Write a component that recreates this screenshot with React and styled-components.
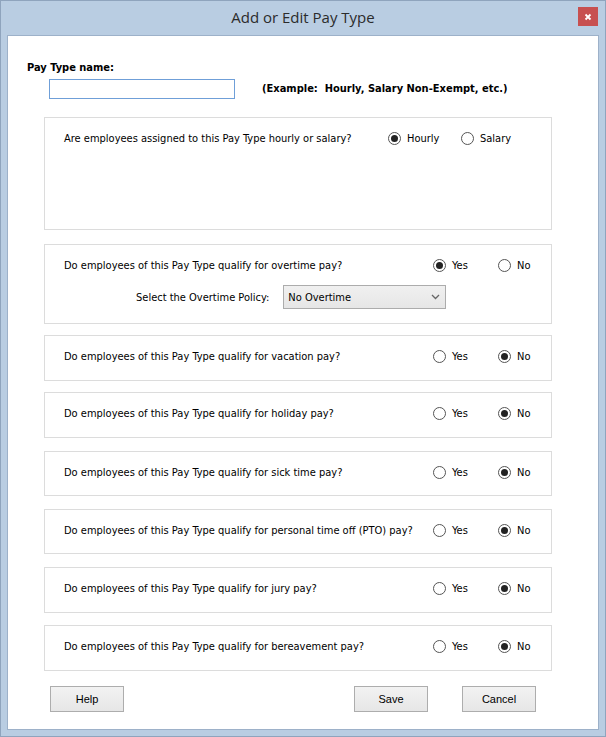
import styled, { createGlobalStyle } from "styled-components";

const GlobalStyle = createGlobalStyle`
  html, body {
    margin: 0;
    padding: 0;
    background: #ffffff;
  }
  * {
    box-sizing: border-box;
  }
`;

const benefits = [
  { label: "vacation", top: 11, height: 46 },
  { label: "holiday", top: 11, height: 46 },
  { label: "sick time", top: 13, height: 45 },
  { label: "personal time off (PTO)", top: 13, height: 45 },
  { label: "jury", top: 13, height: 46 },
  { label: "bereavement", top: 12, height: 46 },
];

function Radio({ checked, label, width }) {
  return (
    <Option $width={width}>
      <Circle $checked={checked} />
      <OptionLabel>{label}</OptionLabel>
    </Option>
  );
}

function YesNo({ yes }) {
  return (
    <>
      <Radio checked={yes} label="Yes" width={65} />
      <Radio checked={!yes} label="No" />
    </>
  );
}

export default function App() {
  return (
    <>
      <GlobalStyle />
      <Window>
        <TitleBar>
          <Title>Add or Edit Pay Type</Title>
          <CloseButton>
            <svg width="8" height="8" viewBox="0 0 8 8">
              <path d="M1.5 1.5 L6.5 6.5 M6.5 1.5 L1.5 6.5" stroke="#fff" strokeWidth="1.8" />
            </svg>
          </CloseButton>
        </TitleBar>
        <Client>
          <NameLabel>Pay Type name:</NameLabel>
          <NameRow>
            <NameInput type="text" />
            <Example>(Example:&nbsp; Hourly, Salary Non-Exempt, etc.)</Example>
          </NameRow>

          <Section $height={113} $top={18}>
            <Row>
              <Question $width={324}>
                Are employees assigned to this Pay Type hourly or salary?
              </Question>
              <Radio checked label="Hourly" width={73} />
              <Radio label="Salary" />
            </Row>
          </Section>

          <Section $height={80} $top={14}>
            <Row>
              <Question $width={369}>
                Do employees of this Pay Type qualify for overtime pay?
              </Question>
              <YesNo yes />
            </Row>
            <PolicyRow>
              <PolicyLabel>Select the Overtime Policy:</PolicyLabel>
              <Select>
                <span>No Overtime</span>
                <svg width="9" height="6" viewBox="0 0 9 6">
                  <path d="M1 1 L4.5 4.5 L8 1" stroke="#666" strokeWidth="1.3" fill="none" />
                </svg>
              </Select>
            </PolicyRow>
          </Section>

          {benefits.map((b) => (
            <Section key={b.label} $height={b.height} $top={b.top}>
              <Row>
                <Question $width={369}>
                  Do employees of this Pay Type qualify for {b.label} pay?
                </Question>
                <YesNo />
              </Row>
            </Section>
          ))}

          <ButtonRow>
            <Button>Help</Button>
            <Spacer />
            <Button>Save</Button>
            <Button>Cancel</Button>
          </ButtonRow>
        </Client>
      </Window>
    </>
  );
}

const Window = styled.div`
  width: 606px;
  height: 737px;
  background: #b9cde2;
  border: 1px solid #8fa4bd;
  display: flex;
  flex-direction: column;
  font-family: "DejaVu Sans Condensed", "Liberation Sans", sans-serif;
  font-size: 11px;
  color: #000;
`;

const TitleBar = styled.div`
  height: 34px;
  display: flex;
  align-items: center;
  justify-content: center;
  position: relative;
`;

const Title = styled.div`
  font-family: "Open Sans", "Noto Sans", sans-serif;
  font-size: 15px;
  color: #2b2b2b;
  margin-top: -2px;
`;

const CloseButton = styled.div`
  position: absolute;
  right: 7px;
  top: 6px;
  width: 20px;
  height: 19px;
  background: #c75050;
  display: flex;
  align-items: center;
  justify-content: center;
`;

const Client = styled.div`
  flex: 1;
  margin: 0 6px 6px;
  background: #fff;
  border: 1px solid #9db1c9;
  padding: 25px 0 0 19px;
  display: flex;
  flex-direction: column;
`;

const NameLabel = styled.div`
  font-weight: bold;
  line-height: 13px;
`;

const NameRow = styled.div`
  display: flex;
  align-items: center;
  margin-top: 5px;
  padding-left: 22px;
`;

const NameInput = styled.input`
  width: 186px;
  height: 20px;
  border: 1px solid #6f9fd8;
  margin: 0;
  padding: 0 3px;
  outline: none;
`;

const Example = styled.div`
  font-weight: bold;
  margin-left: 27px;
  margin-top: -2px;
`;

const Section = styled.div`
  width: 508px;
  height: ${(p) => p.$height}px;
  margin-top: ${(p) => p.$top}px;
  margin-left: 17px;
  border: 1px solid #dcdcdc;
  padding: 13px 0 0 19px;
`;

const Row = styled.div`
  display: flex;
  align-items: center;
  line-height: 13px;
`;

const Question = styled.div`
  width: ${(p) => p.$width}px;
  flex-shrink: 0;
`;

const Option = styled.div`
  display: flex;
  align-items: center;
  width: ${(p) => (p.$width ? `${p.$width}px` : "auto")};
  margin-top: 1px;
`;

const Circle = styled.span`
  width: 13px;
  height: 13px;
  border-radius: 50%;
  border: 1px solid #555;
  background: #fff;
  display: flex;
  align-items: center;
  justify-content: center;
  flex-shrink: 0;

  &::after {
    content: "";
    width: 7px;
    height: 7px;
    border-radius: 50%;
    background: #222;
    display: ${(p) => (p.$checked ? "block" : "none")};
  }
`;

const OptionLabel = styled.span`
  margin-left: 6px;
`;

const PolicyRow = styled.div`
  display: flex;
  align-items: center;
  margin-top: 13px;
  padding-left: 72px;
`;

const PolicyLabel = styled.div`
  margin-right: 14px;
`;

const Select = styled.div`
  width: 163px;
  height: 24px;
  border: 1px solid #acacac;
  background: linear-gradient(#f0f0f0, #e6e6e6);
  display: flex;
  align-items: center;
  justify-content: space-between;
  padding: 0 5px 0 4px;
`;

const ButtonRow = styled.div`
  display: flex;
  gap: 34px;
  margin-top: 15px;
  margin-left: 23px;
  width: 486px;
`;

const Spacer = styled.div`
  flex: 1;
`;

const Button = styled.div`
  width: 74px;
  height: 26px;
  border: 1px solid #adadad;
  background: linear-gradient(#f2f2f2, #e6e6e6);
  display: flex;
  align-items: center;
  justify-content: center;
  font-family: "Liberation Sans", sans-serif;
`;
